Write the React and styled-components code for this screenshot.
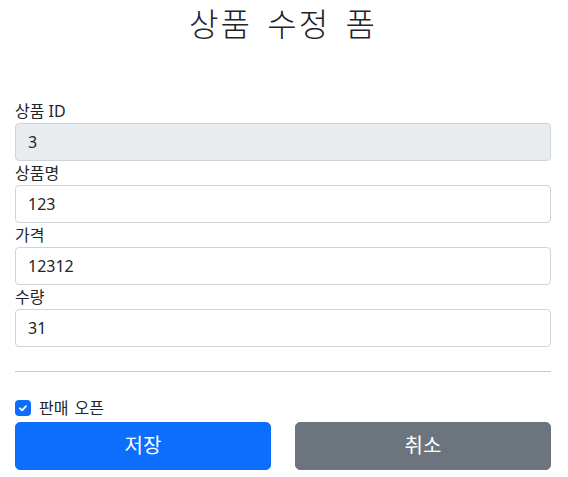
import styled, { createGlobalStyle } from 'styled-components'

const GlobalStyle = createGlobalStyle`
  * { box-sizing: border-box; }
  body {
    margin: 0;
    background: #fff;
    color: #212529;
    font-family: 'Noto Sans', 'Noto Sans CJK KR', sans-serif;
    font-size: 16px;
    line-height: 1.5;
  }
`

const Container = styled.div`
  padding: 0 17px 0 15px;
`

const Header = styled.div`
  padding: 5px 0 48px;
  text-align: center;
`

const Title = styled.h2`
  margin: 0 0 8px;
  font-size: 32px;
  font-weight: 300;
  line-height: 1.2;
  letter-spacing: 2px;
  word-spacing: 5px;
`

const Field = styled.div``

const Label = styled.label`
  display: block;
  font-size: 16px;
  line-height: 24px;
`

const Input = styled.input`
  display: block;
  width: 100%;
  height: 38px;
  padding: 6px 12px;
  font: inherit;
  font-size: 16px;
  color: #212529;
  background: ${p => (p.disabled ? '#e9ecef' : '#fff')};
  border: 1px solid #ced4da;
  border-radius: 4px;
  outline: none;
`

const Divider = styled.hr`
  margin: 24px 0;
  border: 0;
  border-top: 1px solid #212529;
  opacity: 0.25;
`

const Check = styled.label`
  display: flex;
  align-items: center;
  gap: 8px;
  min-height: 24px;
  margin-bottom: 2px;
  font-size: 16px;
  word-spacing: 2px;
`

const Box = styled.span`
  width: 16px;
  height: 16px;
  border-radius: 4px;
  background: #0d6efd;
  display: flex;
  align-items: center;
  justify-content: center;
`

const Row = styled.div`
  display: grid;
  grid-template-columns: 1fr 1fr;
  gap: 24px;
`

const Button = styled.button`
  height: 48px;
  padding: 8px 16px;
  font: inherit;
  font-size: 20px;
  line-height: 30px;
  color: #fff;
  background: ${p => (p.variant === 'secondary' ? '#6c757d' : '#0d6efd')};
  border: 1px solid ${p => (p.variant === 'secondary' ? '#6c757d' : '#0d6efd')};
  border-radius: 5px;
`

const fields = [
  { label: '상품 ID', value: '3', disabled: true },
  { label: '상품명', value: '123' },
  { label: '가격', value: '12312' },
  { label: '수량', value: '31' },
]

const App = () => (
  <>
    <GlobalStyle />
    <Container>
      <Header>
        <Title>상품 수정 폼</Title>
      </Header>
      <form onSubmit={e => e.preventDefault()}>
        {fields.map(f => (
          <Field key={f.label}>
            <Label>{f.label}</Label>
            <Input defaultValue={f.value} disabled={f.disabled} />
          </Field>
        ))}
        <Divider />
        <Check>
          <Box>
            <svg width="12" height="12" viewBox="0 0 20 20">
              <path d="M5 10.5l3.5 3.5 6.5-7" fill="none" stroke="#fff" strokeWidth="3" strokeLinecap="round" strokeLinejoin="round" />
            </svg>
          </Box>
          판매 오픈
        </Check>
        <Row>
          <Button type="submit">저장</Button>
          <Button type="button" variant="secondary">취소</Button>
        </Row>
      </form>
    </Container>
  </>
)

export default App
